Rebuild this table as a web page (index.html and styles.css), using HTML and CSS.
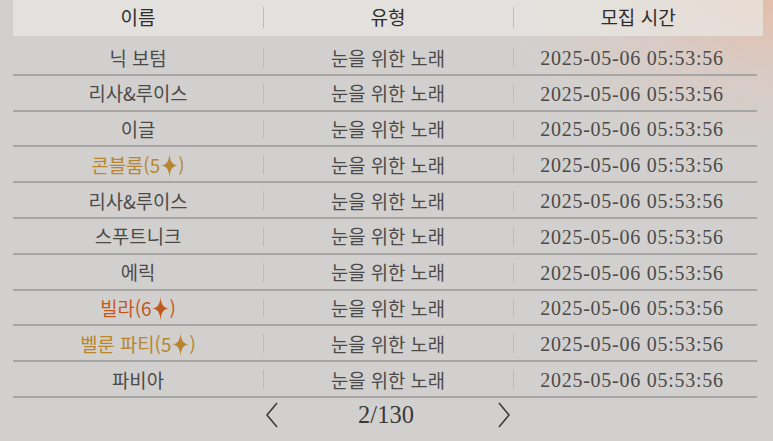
FILE: index.html
```html
<!DOCTYPE html>
<html lang="ko">
<head>
<meta charset="utf-8">
<link rel="stylesheet" href="styles.css">
</head>
<body>
<div class="panel">
  <div class="head">
    <div class="cell">이름</div>
    <div class="cell div">유형</div>
    <div class="cell div">모집 시간</div>
  </div>
  <div class="rows">
    <div class="row"><div class="cell">닉 보텀</div><div class="cell div">눈을 위한 노래</div><div class="cell div num">2025-05-06 05:53:56</div></div>
    <div class="row"><div class="cell">리사&amp;루이스</div><div class="cell div">눈을 위한 노래</div><div class="cell div num">2025-05-06 05:53:56</div></div>
    <div class="row"><div class="cell">이글</div><div class="cell div">눈을 위한 노래</div><div class="cell div num">2025-05-06 05:53:56</div></div>
    <div class="row"><div class="cell gold">콘블룸(5<svg class="star" viewBox="0 0 20 30"><path d="M10 0 Q10.25 14.6 20 15 Q10.25 15.4 10 30 Q9.75 15.4 0 15 Q9.75 14.6 10 0 Z"/></svg>)</div><div class="cell div">눈을 위한 노래</div><div class="cell div num">2025-05-06 05:53:56</div></div>
    <div class="row"><div class="cell">리사&amp;루이스</div><div class="cell div">눈을 위한 노래</div><div class="cell div num">2025-05-06 05:53:56</div></div>
    <div class="row"><div class="cell">스푸트니크</div><div class="cell div">눈을 위한 노래</div><div class="cell div num">2025-05-06 05:53:56</div></div>
    <div class="row"><div class="cell">에릭</div><div class="cell div">눈을 위한 노래</div><div class="cell div num">2025-05-06 05:53:56</div></div>
    <div class="row"><div class="cell orange">빌라(6<svg class="star" viewBox="0 0 20 30"><path d="M10 0 Q10.25 14.6 20 15 Q10.25 15.4 10 30 Q9.75 15.4 0 15 Q9.75 14.6 10 0 Z"/></svg>)</div><div class="cell div">눈을 위한 노래</div><div class="cell div num">2025-05-06 05:53:56</div></div>
    <div class="row"><div class="cell gold">벨룬 파티(5<svg class="star" viewBox="0 0 20 30"><path d="M10 0 Q10.25 14.6 20 15 Q10.25 15.4 10 30 Q9.75 15.4 0 15 Q9.75 14.6 10 0 Z"/></svg>)</div><div class="cell div">눈을 위한 노래</div><div class="cell div num">2025-05-06 05:53:56</div></div>
    <div class="row"><div class="cell">파비아</div><div class="cell div">눈을 위한 노래</div><div class="cell div num">2025-05-06 05:53:56</div></div>
  </div>
  <div class="pager">
    <svg class="chev" viewBox="0 0 14 26"><path d="M12 1 L2 13 L12 25" /></svg>
    <span class="page">2/130</span>
    <svg class="chev" viewBox="0 0 14 26"><path d="M2 1 L12 13 L2 25" /></svg>
  </div>
</div>
</body>
</html>
```
FILE: styles.css
```css
html, body {
  margin: 0;
  padding: 0;
}
body {
  width: 773px;
  height: 441px;
  overflow: hidden;
  background:
    radial-gradient(ellipse 300px 170px at 790px -20px, rgba(232, 184, 160, 0.9), rgba(226, 196, 184, 0.45) 55%, rgba(210, 208, 206, 0) 100%),
    #d2d0ce;
  font-family: "Noto Sans CJK KR", "Noto Sans", sans-serif;
  color: #4b4a49;
}
.panel {
  padding: 0 10px 0 13px;
}
.head {
  display: grid;
  grid-template-columns: 250px 250px 250px;
  height: 36px;
  align-items: center;
  background: rgba(234, 232, 228, 0.7);
  color: #2f2e2d;
  font-size: 19px;
  width: 750px;
}
.rows {
  margin-top: 4px;
  width: 744px;
}
.row {
  display: grid;
  grid-template-columns: 250px 250px 244px;
  height: 33.8px;
  align-items: center;
  border-bottom: 2px solid #a8a6a4;
  font-size: 18.8px;
}
.cell {
  display: flex;
  align-items: center;
  justify-content: center;
  position: relative;
  height: 100%;
  line-height: 1;
}
.head .cell {
  padding-bottom: 3px;
  box-sizing: border-box;
}
.cell.div::before {
  content: "";
  position: absolute;
  left: 0;
  top: 8px;
  bottom: 7px;
  width: 1px;
  background: #bdbbb9;
}
.head .cell.div::before {
  top: 7px;
  bottom: 8px;
}
.row .cell {
  padding-top: 2px;
  box-sizing: border-box;
}
.num {
  font-family: "Liberation Serif", serif;
  font-size: 20px;
  letter-spacing: 0.75px;
  padding-right: 6px;
}
.gold {
  color: #b8862e;
}
.orange {
  color: #c4581c;
}
.star {
  width: 17px;
  height: 27px;
  margin: 0 0 0 1px;
  fill: currentColor;
}
.pager {
  display: flex;
  align-items: center;
  height: 32px;
  margin-top: 1px;
  padding-left: 252px;
}
.chev {
  width: 14px;
  height: 26px;
  fill: none;
  stroke: #3d3c3b;
  stroke-width: 1.6;
}
.page {
  font-family: "Liberation Serif", serif;
  font-size: 24.5px;
  color: #3a3938;
  width: 222px;
  text-align: center;
  margin-left: -4px;
}
```
